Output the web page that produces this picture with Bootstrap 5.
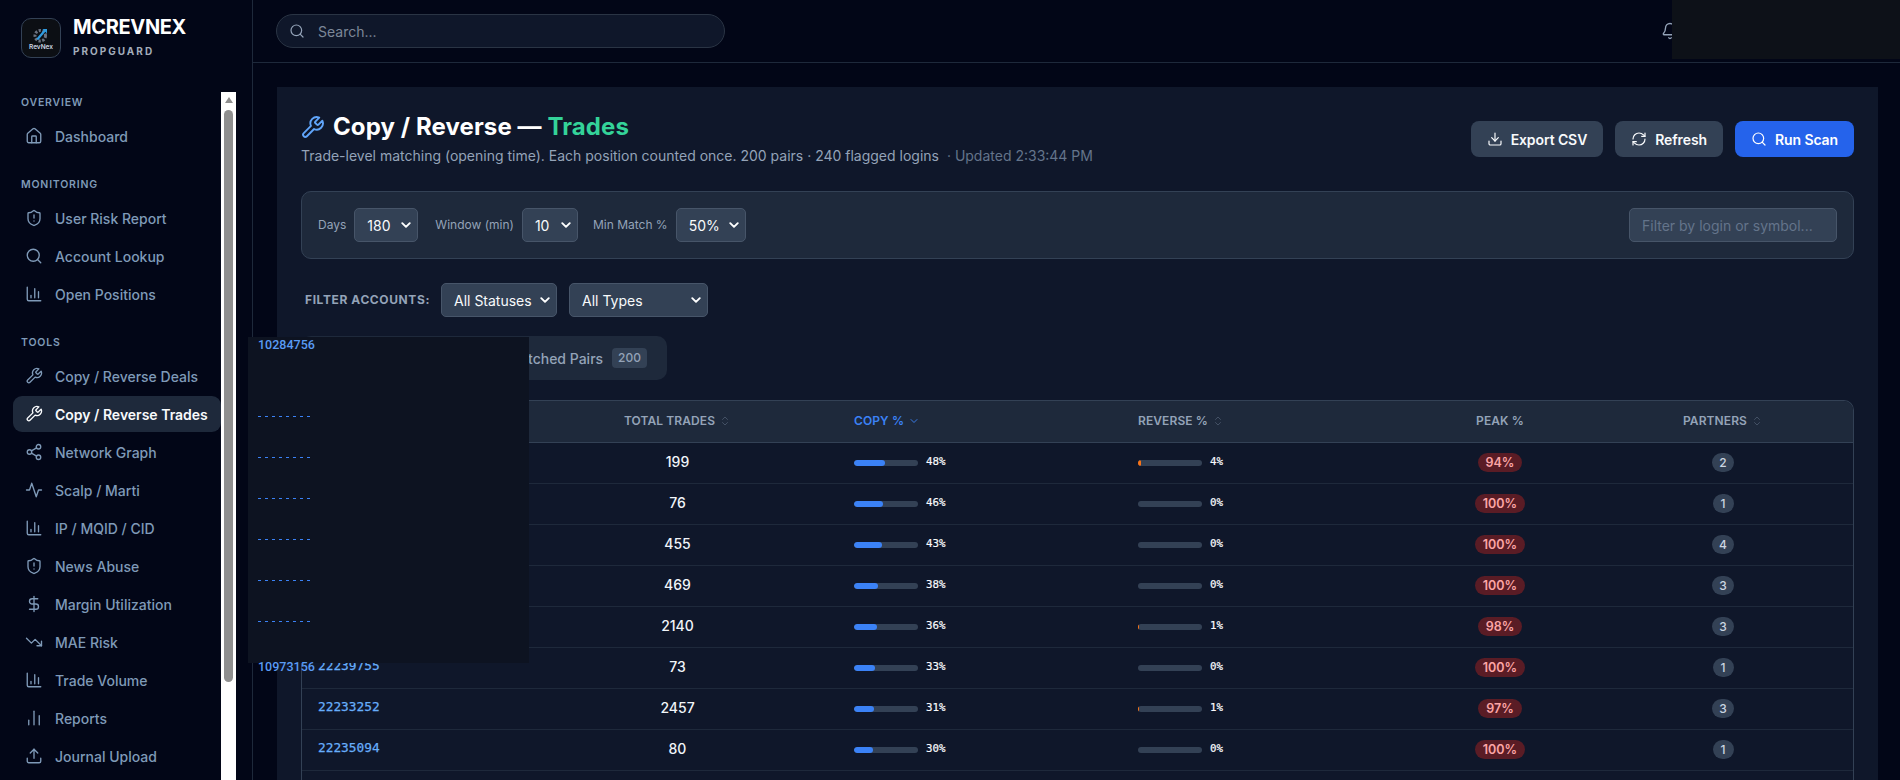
<!DOCTYPE html>
<html lang="en">
<head>
<meta charset="UTF-8">
<title>PropGuard - Copy / Reverse Trades</title>
<link rel="stylesheet" href="https://cdn.jsdelivr.net/npm/bootstrap@5.3.0/dist/css/bootstrap.min.css">
<style>
html, body { height: 100%; overflow: hidden; }
body { background: #020617; color: #f1f5f9; font-family: Inter, "Liberation Sans", sans-serif; font-size: 14px; }
.ico { fill: none; stroke: currentColor; stroke-width: 1.8; stroke-linecap: round; stroke-linejoin: round; flex: none; }

.side-bar { width: 253px; height: 780px; border-right: 1px solid #1e293b; flex: none; }
.brand-box { height: 92px; padding: 18px 0 0 21px; gap: 12px; }
.logo-box { width: 40px; height: 40px; border: 1px solid #334155; border-radius: 10px; background: #0c0f14; }
.logo-box span { font-size: 6.5px; line-height: 7px; color: #cbd5e1; font-weight: 600; }
.brand-name { font-size: 20px; font-weight: 700; line-height: 20px; color: #fff; margin-top: -1px; letter-spacing: -.35px; }
.brand-sub { font-size: 10px; font-weight: 700; letter-spacing: 2px; color: #a3adbb; margin-top: 8px; line-height: 12px; }
.nav-wrap { height: 688px; }
.nav-col { width: 221px; padding-left: 13px; }
.nav-head { font-size: 10.5px; font-weight: 600; letter-spacing: .8px; color: #7f9ab8; padding-left: 8px; line-height: 14px; margin-top: 24px; margin-bottom: 8px; }
.nav-head.first { margin-top: 4px; }
.nav-row { height: 36px; margin-bottom: 2px; padding-left: 12px; gap: 12px; border-radius: 9px; color: #7f9ab8; font-size: 14px; font-weight: 500; text-decoration: none; }
.nav-row.on { background: #1e293b; color: #f8fafc; font-weight: 600; }
.scroll-track { width: 15px; background: #fff; padding: 0 3px; }
.scroll-arrow { width: 0; height: 0; margin: 5px auto 7px; border-left: 4px solid transparent; border-right: 4px solid transparent; border-bottom: 6px solid #8f8f8f; }
.scroll-thumb { height: 572px; background: #8f8f8f; border-radius: 5px; }

.top-bar { height: 63px; border-bottom: 1px solid #1e293b; padding-left: 23px; }
.search-pill { width: 449px; height: 34px; border: 1px solid #2a3444; border-radius: 17px; background: #0f172a; padding-left: 12px; gap: 13px; color: #94a3b8; }
.search-pill span { font-size: 14px; color: #7c8798; }
.bell-ico { color: #94a3b8; margin-left: 936px; }
.top-cover { position: absolute; left: 1672px; top: 0; width: 228px; height: 59px; background: #0d1118; }

.main-card { background: #0f172a; margin: 24px 22px 0 24px; padding: 25px 24px 0 24px; height: 693px; }
.page-title { font-size: 24px; font-weight: 700; line-height: 30px; color: #fff; margin: 0; gap: 8px; letter-spacing: .1px; }
.page-title svg { color: #60a5fa; margin-left: -1px; }
.page-title em { font-style: normal; color: #34d399; }
.page-sub { font-size: 14px; color: #94a3b8; margin-top: 4px; line-height: 20px; }
.page-sub small { color: #64748b; font-size: 14px; margin-left: 4px; }
.act-btn { height: 36px; padding: 0 16px; gap: 8px; border: 0; border-radius: 8px; background: #334155; color: #f8fafc; font-size: 14px; font-weight: 600; letter-spacing: -.1px; }
.act-btn.go { background: #2563eb; color: #fff; }
.act-wrap { gap: 12px; }

.ctl-panel { height: 68px; margin-top: 25px; padding: 0 16px 0 16px; background: #1e293b; border: 1px solid #334155; border-radius: 10px; }
.ctl-label { font-size: 12px; color: #94a3b8; margin-right: 8px; }
.dark-select.form-select { height: 34px; padding: 0 20px 0 12px; font-size: 14px; background-color: #334155; border: 1px solid #475569; color: #f8fafc; border-radius: 5px; background-position: right 6px center; background-size: 10px 10px; background-image: url("data:image/svg+xml,%3csvg xmlns='http://www.w3.org/2000/svg' viewBox='0 0 16 16'%3e%3cpath fill='none' stroke='%23ffffff' stroke-linecap='round' stroke-linejoin='round' stroke-width='3' d='m2 5 6 6 6-6'/%3e%3c/svg%3e"); }
.w-days { width: 64px; margin-right: 17px; }
.w-win { width: 56px; margin-right: 15px; }
.w-min { width: 70px; }
.w-status { width: 116px; margin-right: 12px; }
.w-type { width: 139px; }
.filter-input.form-control { width: 208px; height: 34px; background: #334155; border: 1px solid #475569; border-radius: 5px; color: #f8fafc; font-size: 14px; padding: 0 12px; }
.filter-input::placeholder { color: #64748b; }

.acct-row { margin-top: 24px; padding-left: 4px; }
.acct-label { font-size: 12px; font-weight: 700; letter-spacing: .6px; color: #94a3b8; margin-right: 11px; }
.tab-strip { width: 366px; height: 44px; margin-top: 19px; background: #1e293b; border-radius: 10px; padding-right: 20px; justify-content: flex-end; gap: 9px; color: #94a3b8; font-size: 14px; font-weight: 500; }
.tab-count { background: #334155; color: #94a3b8; font-size: 12px; border-radius: 4px; padding: 2px 6px; line-height: 16px; }

.table-box { margin-top: 20px; border: 1px solid #334155; border-bottom: 0; border-radius: 10px 10px 0 0; overflow: hidden; }
.trade-table { table-layout: fixed; width: 100%; border-collapse: collapse; }
.trade-table th { height: 41px; background: #1e293b; border-bottom: 1px solid #334155; font-size: 12px; font-weight: 600; letter-spacing: .1px; color: #94a3b8; padding: 0 16px; }
.trade-table td { height: 41px; border-bottom: 1px solid #1e293b; padding: 0 16px 2px; font-size: 14px; color: #f1f5f9; font-weight: 500; }
.trade-table th svg { margin-left: 4px; vertical-align: -2px; color: #475569; }
.trade-table th.sorted { color: #3b82f6; }
.trade-table th.sorted svg { color: #3b82f6; }
.c1 { width: 215px; } .c2 { width: 321px; } .c3 { width: 284px; } .c4 { width: 285px; } .c5 { width: 186px; }
.login-link { font-family: "DejaVu Sans Mono", monospace; font-size: 12.8px; color: #67aefb; -webkit-text-stroke: .25px #67aefb; display: block; margin-top: -2px; }
.pct-line { margin-top: 2px; }
.pct-bar { width: 64px; height: 6px; border-radius: 3px; background: #334155; overflow: hidden; flex: none; }
.pct-fill { height: 100%; border-radius: 3px; }
.fill-copy { background: #3b82f6; }
.fill-rev { background: #f97316; }
.pct-num { font-family: "DejaVu Sans Mono", monospace; font-size: 10.8px; color: #f8fafc; margin-left: 8px; -webkit-text-stroke: .2px #f8fafc; }
.peak-pill { display: inline-block; padding: 0 8px; height: 19px; line-height: 19px; border-radius: 10px; background: #5a1c25; color: #fca5a5; font-size: 12.5px; font-weight: 600; }
.partner-pill { display: inline-block; min-width: 21px; padding: 0 7px; height: 19px; line-height: 19px; border-radius: 10px; background: #334155; color: #cbd5e1; font-size: 12px; font-weight: 500; }

.float-cover { position: absolute; left: 248px; top: 337px; width: 281px; height: 326px; background: #0d1321; padding-left: 10px; z-index: 5; }
.float-id { font-family: Roboto, "Liberation Sans", sans-serif; font-size: 12.5px; font-weight: 500; line-height: 16px; color: #5a9cf5; }
.float-peek { width: 53px; height: 1px; margin: 0 0 40px 0; background: repeating-linear-gradient(90deg, #3b82f6 0 3px, transparent 3px 7px); }
.peek-start { margin-top: 63px; }
.float-last { margin-top: -3px; }
</style>
</head>
<body>
<svg width="0" height="0" class="position-absolute">
  <symbol id="i-home" viewBox="0 0 24 24"><path d="M15 21v-8a1 1 0 0 0-1-1h-4a1 1 0 0 0-1 1v8"/><path d="M3 10a2 2 0 0 1 .709-1.528l7-5.999a2 2 0 0 1 2.582 0l7 5.999A2 2 0 0 1 21 10v9a2 2 0 0 1-2 2H5a2 2 0 0 1-2-2z"/></symbol>
  <symbol id="i-shield" viewBox="0 0 24 24"><path d="M20 13c0 5-3.5 7.5-7.66 8.95a1 1 0 0 1-.67-.01C7.5 20.5 4 18 4 13V6a1 1 0 0 1 1-1c2 0 4.5-1.2 6.24-2.72a1.17 1.17 0 0 1 1.52 0C14.51 3.81 17 5 19 5a1 1 0 0 1 1 1z"/><path d="M12 8v4"/><path d="M12 16h.01"/></symbol>
  <symbol id="i-search" viewBox="0 0 24 24"><circle cx="11" cy="11" r="8"/><path d="m21 21-4.3-4.3"/></symbol>
  <symbol id="i-chart" viewBox="0 0 24 24"><path d="M3 3v16a2 2 0 0 0 2 2h16"/><path d="M18 17V9"/><path d="M13 17V5"/><path d="M8 17v-3"/></symbol>
  <symbol id="i-wrench" viewBox="0 0 24 24"><path d="M14.7 6.3a1 1 0 0 0 0 1.4l1.6 1.6a1 1 0 0 0 1.4 0l3.77-3.77a6 6 0 0 1-7.94 7.94l-6.91 6.91a2.12 2.12 0 0 1-3-3l6.91-6.91a6 6 0 0 1 7.94-7.94l-3.76 3.76z"/></symbol>
  <symbol id="i-share" viewBox="0 0 24 24"><circle cx="18" cy="5" r="3"/><circle cx="6" cy="12" r="3"/><circle cx="18" cy="19" r="3"/><path d="m8.59 13.51 6.83 3.98"/><path d="m15.41 6.51-6.82 3.98"/></symbol>
  <symbol id="i-pulse" viewBox="0 0 24 24"><path d="M22 12h-4l-3 9L9 3l-3 9H2"/></symbol>
  <symbol id="i-dollar" viewBox="0 0 24 24"><path d="M12 2v20"/><path d="M17 5H9.5a3.5 3.5 0 0 0 0 7h5a3.5 3.5 0 0 1 0 7H6"/></symbol>
  <symbol id="i-down" viewBox="0 0 24 24"><path d="M16 17h6v-6"/><path d="m22 17-8.5-8.5-5 5L2 7"/></symbol>
  <symbol id="i-bars" viewBox="0 0 24 24"><path d="M5 21v-6"/><path d="M12 21V3"/><path d="M19 21V9"/></symbol>
  <symbol id="i-upload" viewBox="0 0 24 24"><path d="M21 15v4a2 2 0 0 1-2 2H5a2 2 0 0 1-2-2v-4"/><path d="m17 8-5-5-5 5"/><path d="M12 3v12"/></symbol>
  <symbol id="i-download" viewBox="0 0 24 24"><path d="M21 15v4a2 2 0 0 1-2 2H5a2 2 0 0 1-2-2v-4"/><path d="m7 10 5 5 5-5"/><path d="M12 15V3"/></symbol>
  <symbol id="i-refresh" viewBox="0 0 24 24"><path d="M3 12a9 9 0 0 1 9-9 9.75 9.75 0 0 1 6.74 2.74L21 8"/><path d="M21 3v5h-5"/><path d="M21 12a9 9 0 0 1-9 9 9.75 9.75 0 0 1-6.74-2.74L3 16"/><path d="M8 16H3v5"/></symbol>
  <symbol id="i-bell" viewBox="0 0 24 24"><path d="M10.268 21a2 2 0 0 0 3.464 0"/><path d="M3.262 15.326A1 1 0 0 0 4 17h16a1 1 0 0 0 .74-1.673C19.41 13.956 18 12.499 18 8A6 6 0 0 0 6 8c0 4.499-1.411 5.956-2.738 7.326"/></symbol>
  <symbol id="i-sort" viewBox="0 0 24 24"><path d="m7 9 5-5 5 5"/><path d="m7 15 5 5 5-5"/></symbol>
  <symbol id="i-chev" viewBox="0 0 24 24"><path d="m6 9 6 6 6-6"/></symbol>
</svg>

<div class="d-flex">
  <aside class="side-bar">
    <div class="brand-box d-flex">
      <div class="logo-box d-flex flex-column align-items-center justify-content-center">
        <svg width="18" height="18" viewBox="0 0 24 24"><circle cx="11" cy="13" r="7" fill="none" stroke="#6b7280" stroke-width="4" stroke-dasharray="3 2"/><path d="M7 18 L18 5" stroke="#2f9be0" stroke-width="3"/><path d="M14 4h6v6z" fill="#2f9be0"/></svg>
        <span>RevNex</span>
      </div>
      <div>
        <div class="brand-name">MCREVNEX</div>
        <div class="brand-sub">PROPGUARD</div>
      </div>
    </div>
    <div class="nav-wrap d-flex">
      <nav class="nav-col">
        <div class="nav-head first">OVERVIEW</div>
        <a class="nav-row d-flex align-items-center"><svg class="ico" width="18" height="18"><use href="#i-home"/></svg>Dashboard</a>
        <div class="nav-head">MONITORING</div>
        <a class="nav-row d-flex align-items-center"><svg class="ico" width="18" height="18"><use href="#i-shield"/></svg>User Risk Report</a>
        <a class="nav-row d-flex align-items-center"><svg class="ico" width="18" height="18"><use href="#i-search"/></svg>Account Lookup</a>
        <a class="nav-row d-flex align-items-center"><svg class="ico" width="18" height="18"><use href="#i-chart"/></svg>Open Positions</a>
        <div class="nav-head">TOOLS</div>
        <a class="nav-row d-flex align-items-center"><svg class="ico" width="18" height="18"><use href="#i-wrench"/></svg>Copy / Reverse Deals</a>
        <a class="nav-row on d-flex align-items-center"><svg class="ico" width="18" height="18"><use href="#i-wrench"/></svg>Copy / Reverse Trades</a>
        <a class="nav-row d-flex align-items-center"><svg class="ico" width="18" height="18"><use href="#i-share"/></svg>Network Graph</a>
        <a class="nav-row d-flex align-items-center"><svg class="ico" width="18" height="18"><use href="#i-pulse"/></svg>Scalp / Marti</a>
        <a class="nav-row d-flex align-items-center"><svg class="ico" width="18" height="18"><use href="#i-chart"/></svg>IP / MQID / CID</a>
        <a class="nav-row d-flex align-items-center"><svg class="ico" width="18" height="18"><use href="#i-shield"/></svg>News Abuse</a>
        <a class="nav-row d-flex align-items-center"><svg class="ico" width="18" height="18"><use href="#i-dollar"/></svg>Margin Utilization</a>
        <a class="nav-row d-flex align-items-center"><svg class="ico" width="18" height="18"><use href="#i-down"/></svg>MAE Risk</a>
        <a class="nav-row d-flex align-items-center"><svg class="ico" width="18" height="18"><use href="#i-chart"/></svg>Trade Volume</a>
        <a class="nav-row d-flex align-items-center"><svg class="ico" width="18" height="18"><use href="#i-bars"/></svg>Reports</a>
        <a class="nav-row d-flex align-items-center"><svg class="ico" width="18" height="18"><use href="#i-upload"/></svg>Journal Upload</a>
      </nav>
      <div class="scroll-track">
        <div class="scroll-arrow"></div>
        <div class="scroll-thumb"></div>
      </div>
    </div>
  </aside>

  <div class="flex-grow-1">
    <header class="top-bar d-flex align-items-center">
      <div class="search-pill d-flex align-items-center">
        <svg class="ico" width="16" height="16"><use href="#i-search"/></svg>
        <span>Search...</span>
      </div>
      <svg class="ico bell-ico" width="18" height="18"><use href="#i-bell"/></svg>
    </header>

    <main class="main-card">
      <div class="d-flex justify-content-between align-items-center">
        <div>
          <h1 class="page-title d-flex align-items-center">
            <svg class="ico" width="25" height="25"><use href="#i-wrench"/></svg>
            <span>Copy / Reverse — <em>Trades</em></span>
          </h1>
          <div class="page-sub">Trade-level matching (opening time). Each position counted once. 200 pairs · 240 flagged logins <small>· Updated 2:33:44 PM</small></div>
        </div>
        <div class="act-wrap d-flex">
          <button class="act-btn d-flex align-items-center"><svg class="ico" width="16" height="16"><use href="#i-download"/></svg>Export CSV</button>
          <button class="act-btn d-flex align-items-center"><svg class="ico" width="16" height="16"><use href="#i-refresh"/></svg>Refresh</button>
          <button class="act-btn go d-flex align-items-center"><svg class="ico" width="16" height="16"><use href="#i-search"/></svg>Run Scan</button>
        </div>
      </div>

      <div class="ctl-panel d-flex align-items-center justify-content-between">
        <div class="d-flex align-items-center">
          <span class="ctl-label">Days</span>
          <select class="form-select dark-select w-days"><option>180</option></select>
          <span class="ctl-label">Window (min)</span>
          <select class="form-select dark-select w-win"><option>10</option></select>
          <span class="ctl-label">Min Match %</span>
          <select class="form-select dark-select w-min"><option>50%</option></select>
        </div>
        <input class="form-control filter-input" type="text" placeholder="Filter by login or symbol...">
      </div>

      <div class="acct-row d-flex align-items-center">
        <span class="acct-label">FILTER ACCOUNTS:</span>
        <select class="form-select dark-select w-status"><option>All Statuses</option></select>
        <select class="form-select dark-select w-type"><option>All Types</option></select>
      </div>

      <div class="tab-strip d-flex align-items-center">
        <span>Matched Pairs</span><span class="tab-count">200</span>
      </div>

      <div class="table-box">
        <table class="trade-table">
          <colgroup><col class="c1"><col class="c2"><col class="c3"><col class="c4"><col class="c5"><col></colgroup>
          <thead>
            <tr>
              <th>LOGIN</th>
              <th class="text-center">TOTAL TRADES<svg class="ico" width="12" height="12"><use href="#i-sort"/></svg></th>
              <th class="sorted">COPY %<svg class="ico" width="12" height="12"><use href="#i-chev"/></svg></th>
              <th>REVERSE %<svg class="ico" width="12" height="12"><use href="#i-sort"/></svg></th>
              <th class="text-center">PEAK %</th>
              <th class="text-center">PARTNERS<svg class="ico" width="12" height="12"><use href="#i-sort"/></svg></th>
            </tr>
          </thead>
          <tbody id="tradeRows"></tbody>
        </table>
      </div>
    </main>
  </div>
</div>

<div class="top-cover"></div>

<div class="float-cover">
  <div class="float-id">10284756</div>
  <div class="float-peek peek-start"></div>
  <div class="float-peek"></div>
  <div class="float-peek"></div>
  <div class="float-peek"></div>
  <div class="float-peek"></div>
  <div class="float-peek"></div>
  <div class="float-id float-last">10973156</div>
</div>

<script src="https://cdn.jsdelivr.net/npm/bootstrap@5.3.0/dist/js/bootstrap.bundle.min.js"></script>
<script>
    const linhas = [
        ['', 199, 48, 4, 94, 2],
        ['', 76, 46, 0, 100, 1],
        ['', 455, 43, 0, 100, 4],
        ['', 469, 38, 0, 100, 3],
        ['', 2140, 36, 1, 98, 3],
        ['22239755', 73, 33, 0, 100, 1],
        ['22233252', 2457, 31, 1, 97, 3],
        ['22235094', 80, 30, 0, 100, 1]
    ]

    function barra(valor, classe){
        return `<div class="pct-line d-flex align-items-center">
            <div class="pct-bar"><div class="pct-fill ${classe}" style="width: ${valor}%"></div></div>
            <span class="pct-num">${valor}%</span>
        </div>`
    }

    let html = ''
    linhas.forEach(l => {
        html += `<tr>
            <td><span class="login-link">${l[0]}</span></td>
            <td class="text-center">${l[1]}</td>
            <td>${barra(l[2], 'fill-copy')}</td>
            <td>${barra(l[3], 'fill-rev')}</td>
            <td class="text-center"><span class="peak-pill">${l[4]}%</span></td>
            <td class="text-center"><span class="partner-pill">${l[5]}</span></td>
        </tr>`
    })
    html += '<tr><td colspan="6"></td></tr>'
    document.querySelector('#tradeRows').innerHTML = html
</script>
</body>
</html>
